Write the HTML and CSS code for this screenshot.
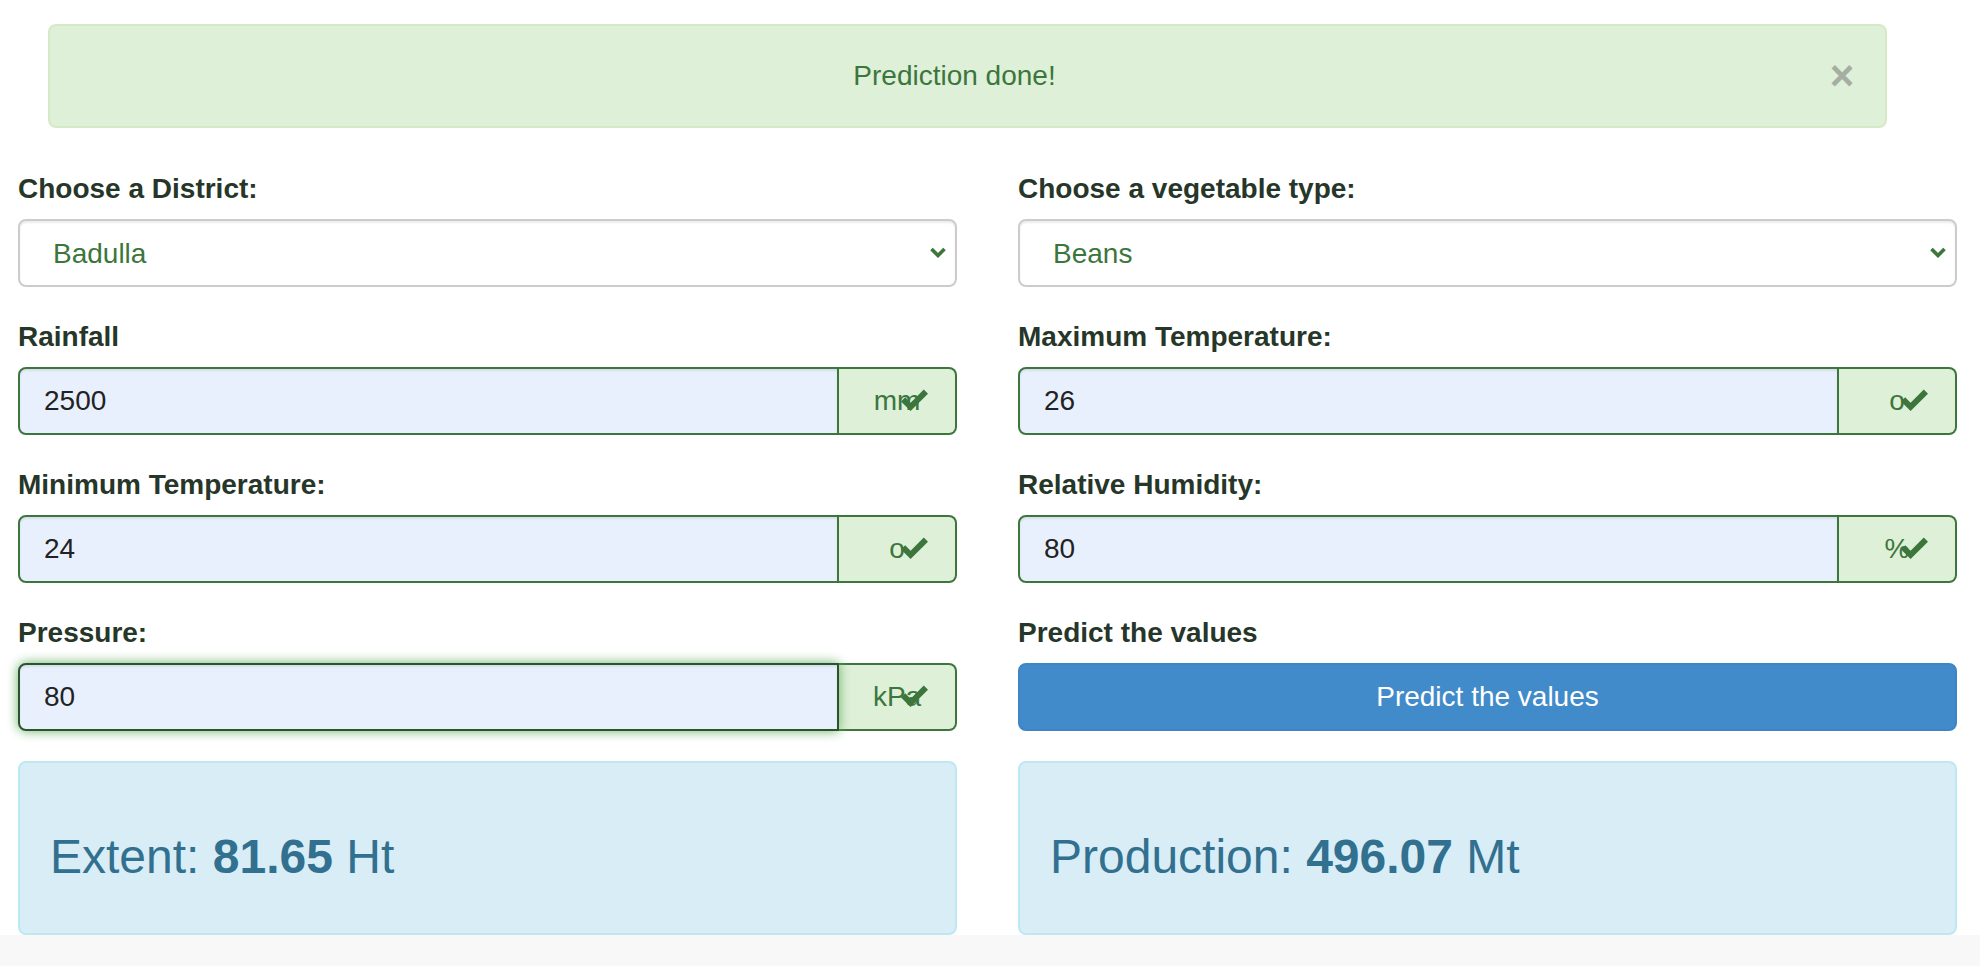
FILE: index.html
```html
<!DOCTYPE html>
<html lang="en">
<head>
<meta charset="utf-8">
<title>Prediction</title>
<link rel="stylesheet" href="styles.css">
</head>
<body>
<div class="alert">
  <span class="alert-text">Prediction done!</span>
  <span class="close">&times;</span>
</div>

<form class="grid">
  <div class="group">
    <label class="label">Choose a District:</label>
    <div class="select-wrap">
      <select class="select"><option>Badulla</option></select>
      <svg class="chevron" viewBox="0 0 16 11" width="16" height="11"><path d="M1.5 2 L8 8.5 L14.5 2" fill="none" stroke="#3c763d" stroke-width="3.6"/></svg>
    </div>
  </div>
  <div class="group">
    <label class="label">Choose a vegetable type:</label>
    <div class="select-wrap">
      <select class="select"><option>Beans</option></select>
      <svg class="chevron" viewBox="0 0 16 11" width="16" height="11"><path d="M1.5 2 L8 8.5 L14.5 2" fill="none" stroke="#3c763d" stroke-width="3.6"/></svg>
    </div>
  </div>

  <div class="group">
    <label class="label">Rainfall</label>
    <div class="input-group">
      <input class="input" type="text" value="2500">
      <span class="addon">mm</span>
      <svg class="ok" viewBox="0 0 27 23" width="27" height="23"><polygon points="0,12.5 4.2,8.3 9.6,13.7 22.8,0.5 27,4.7 9.6,22.1" fill="#3c763d"/></svg>
    </div>
  </div>
  <div class="group">
    <label class="label">Maximum Temperature:</label>
    <div class="input-group">
      <input class="input" type="text" value="26">
      <span class="addon">o</span>
      <svg class="ok" viewBox="0 0 27 23" width="27" height="23"><polygon points="0,12.5 4.2,8.3 9.6,13.7 22.8,0.5 27,4.7 9.6,22.1" fill="#3c763d"/></svg>
    </div>
  </div>

  <div class="group">
    <label class="label">Minimum Temperature:</label>
    <div class="input-group">
      <input class="input" type="text" value="24">
      <span class="addon">o</span>
      <svg class="ok" viewBox="0 0 27 23" width="27" height="23"><polygon points="0,12.5 4.2,8.3 9.6,13.7 22.8,0.5 27,4.7 9.6,22.1" fill="#3c763d"/></svg>
    </div>
  </div>
  <div class="group">
    <label class="label">Relative Humidity:</label>
    <div class="input-group">
      <input class="input" type="text" value="80">
      <span class="addon">%</span>
      <svg class="ok" viewBox="0 0 27 23" width="27" height="23"><polygon points="0,12.5 4.2,8.3 9.6,13.7 22.8,0.5 27,4.7 9.6,22.1" fill="#3c763d"/></svg>
    </div>
  </div>

  <div class="group">
    <label class="label">Pressure:</label>
    <div class="input-group">
      <input class="input input-focus" type="text" value="80">
      <span class="addon">kPa</span>
      <svg class="ok" viewBox="0 0 27 23" width="27" height="23"><polygon points="0,12.5 4.2,8.3 9.6,13.7 22.8,0.5 27,4.7 9.6,22.1" fill="#3c763d"/></svg>
    </div>
  </div>
  <div class="group">
    <label class="label">Predict the values</label>
    <button type="button" class="btn">Predict the values</button>
  </div>

  <div class="result">
    <h3 class="result-text">Extent: <b>81.65</b> Ht</h3>
  </div>
  <div class="result">
    <h3 class="result-text">Production: <b>496.07</b> Mt</h3>
  </div>
</form>
<div class="bottom-band"></div>
</body>
</html>
```
FILE: styles.css
```css
* { box-sizing: border-box; }

html, body {
  margin: 0;
  padding: 0;
  background: #ffffff;
  overflow: hidden;
}

body {
  font-family: "Liberation Sans", Arial, Helvetica, sans-serif;
  font-size: 28px;
  line-height: 40px;
  color: #333;
  height: 966px;
  display: flex;
  flex-direction: column;
}

.alert {
  margin: 24px 0 0 48px;
  width: 1839px;
  height: 104px;
  padding: 30px 30px 30px 30px;
  background: #dff0d8;
  border: 2px solid #d6e9c6;
  border-radius: 8px;
  color: #3c763d;
  display: flex;
  align-items: center;
}

.alert-text {
  flex: 1;
  text-align: center;
}

.close {
  width: 26px;
  font-size: 42px;
  font-weight: bold;
  line-height: 40px;
  color: #a6aea4;
  text-align: center;
}

.grid {
  margin: 41px 0 0 0;
  padding-left: 18px;
  display: grid;
  grid-template-columns: 939px 939px;
  column-gap: 61px;
  row-gap: 30px;
}

.group {
  display: flex;
  flex-direction: column;
}

.label {
  display: block;
  font-weight: bold;
  color: #263628;
  line-height: 40px;
  height: 40px;
  margin-bottom: 10px;
}

.select-wrap {
  position: relative;
  height: 68px;
}

.select {
  -webkit-appearance: none;
  appearance: none;
  width: 100%;
  height: 68px;
  margin: 0;
  padding: 0 60px 0 33px;
  font-family: inherit;
  font-size: 28px;
  color: #3c763d;
  background: #ffffff;
  border: 2px solid #cccccc;
  border-radius: 8px;
  box-shadow: inset 0 2px 2px rgba(0, 0, 0, 0.075);
  outline: none;
}

.chevron {
  position: absolute;
  right: 11px;
  top: 28px;
}

.input-group {
  position: relative;
  display: flex;
  height: 68px;
}

.input {
  flex: 1;
  min-width: 0;
  height: 68px;
  margin: 0;
  padding: 0 24px;
  font-family: inherit;
  font-size: 28px;
  color: #222;
  background: #e8f0fe;
  border: 2px solid #3c763d;
  border-radius: 8px 0 0 8px;
  box-shadow: inset 0 2px 2px rgba(0, 0, 0, 0.075);
  outline: none;
}

.input-focus {
  position: relative;
  z-index: 2;
  border-color: #2b542c;
  box-shadow: inset 0 2px 2px rgba(0, 0, 0, 0.075), 0 0 12px #67b168;
}

.addon {
  flex: 0 0 118px;
  height: 68px;
  display: flex;
  align-items: center;
  justify-content: center;
  background: #dff0d8;
  color: #3c763d;
  border: 2px solid #3c763d;
  border-left: 0;
  border-radius: 0 8px 8px 0;
}

.ok {
  position: absolute;
  right: 29px;
  top: 22px;
  z-index: 3;
}

.btn {
  height: 68px;
  width: 100%;
  margin: 0;
  padding: 0;
  font-family: inherit;
  font-size: 28px;
  color: #ffffff;
  background: #428bca;
  border: 2px solid #3d85c4;
  border-radius: 8px;
}

.result {
  background: #d9edf7;
  border: 2px solid #bce8f1;
  border-radius: 8px;
  color: #31708f;
  padding: 30px;
}

.result-text {
  margin: 38px 0 20px 0;
  font-size: 48px;
  line-height: 52px;
  font-weight: normal;
}

.result-text b {
  font-weight: bold;
}

.bottom-band {
  flex: 1;
  margin-top: 0;
  background: #f8f8f8;
}
```
